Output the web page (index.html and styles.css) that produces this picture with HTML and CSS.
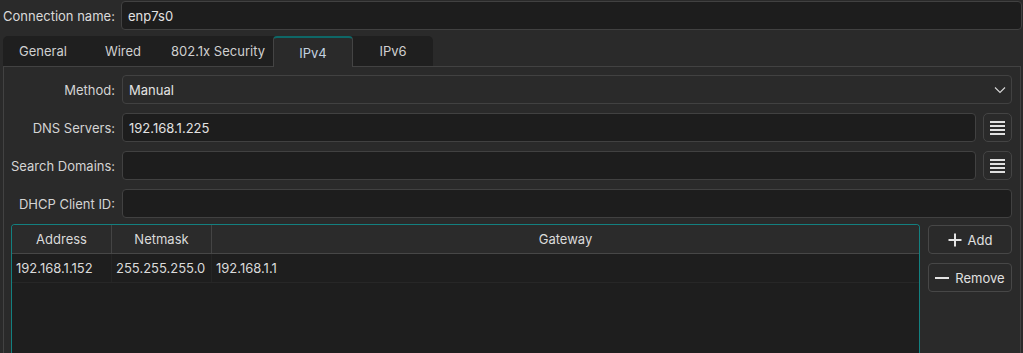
FILE: index.html
```html
<!DOCTYPE html>
<html>
<head>
    <meta charset="UTF-8">
    <title>Editing enp7s0</title>
    <link rel="stylesheet" href="styles.css">
</head>
<body>
    <!-- connection name -->
    <div class="top-row">
        <span class="top-label">Connection name:</span>
        <div class="field">enp7s0</div>
    </div>

    <!-- tabs -->
    <div class="tabs">
        <div class="tab">General</div>
        <div class="tab">Wired</div>
        <div class="tab wide">802.1x Security</div>
        <div class="tab active">IPv4</div>
        <div class="tab">IPv6</div>
    </div>

    <div class="panel">
        <div class="form">
            <span class="label">Method:</span>
            <div class="field combo span">
                <span>Manual</span>
                <svg width="12" height="8" viewBox="0 0 12 8"><path d="M1 1.5 L6 6.5 L11 1.5" fill="none" stroke="#d8d8d8" stroke-width="1.1"/></svg>
            </div>

            <span class="label">DNS Servers:</span>
            <div class="field">192.168.1.225</div>
            <div class="icon-btn">
                <svg width="15" height="14" viewBox="0 0 15 14"><g fill="#e0e0e0"><rect y="0" width="15" height="2"/><rect y="4" width="15" height="2"/><rect y="8" width="15" height="2"/><rect y="12" width="15" height="2"/></g></svg>
            </div>

            <span class="label">Search Domains:</span>
            <div class="field"></div>
            <div class="icon-btn">
                <svg width="15" height="14" viewBox="0 0 15 14"><g fill="#e0e0e0"><rect y="0" width="15" height="2"/><rect y="4" width="15" height="2"/><rect y="8" width="15" height="2"/><rect y="12" width="15" height="2"/></g></svg>
            </div>

            <span class="label">DHCP Client ID:</span>
            <div class="field span"></div>
        </div>

        <div class="addresses">
            <div class="table">
                <div class="thead">
                    <div class="cell c-addr">Address</div>
                    <div class="cell c-mask">Netmask</div>
                    <div class="cell c-gw">Gateway</div>
                </div>
                <div class="trow">
                    <div class="cell c-addr">192.168.1.152</div>
                    <div class="cell c-mask">255.255.255.0</div>
                    <div class="cell c-gw">192.168.1.1</div>
                </div>
            </div>
            <div class="side">
                <div class="btn">
                    <svg width="14" height="14" viewBox="0 0 14 14"><path d="M7 0.5 V13.5 M0.5 7 H13.5" stroke="#e4e4e4" stroke-width="2"/></svg>
                    Add
                </div>
                <div class="btn">
                    <svg width="14" height="14" viewBox="0 0 14 14"><path d="M0 7 H14" stroke="#e4e4e4" stroke-width="2"/></svg>
                    Remove
                </div>
            </div>
        </div>
    </div>
</body>
</html>
```

FILE: styles.css
```css
* { margin: 0; padding: 0; box-sizing: border-box; }
body {
    height: 100vh;
    overflow: hidden;
    background: #2a2a2a;
    color: #dadada;
    font-family: Inter, "Noto Sans", sans-serif;
    font-size: 13px;
    white-space: nowrap;
}

/* connection name */
.top-row {
    display: flex;
    align-items: center;
    padding: 1px 1px 0 3px;
}
.top-label {
    width: 118px;
}

.field {
    flex: 1;
    height: 29px;
    display: flex;
    align-items: center;
    padding: 0 6px;
    background: #1d1d1d;
    border: 1px solid #414141;
    border-radius: 4px;
    color: #e2e2e2;
}

/* tabs */
.tabs {
    display: flex;
    margin: 6px 0 0 3px;
    width: 430px;
    height: 30px;
    background: #1f1f1f;
    border-radius: 5px 5px 0 0;
}
.tab {
    width: 80px;
    display: flex;
    align-items: center;
    justify-content: center;
    color: #d0d0d0;
}
.tab.wide { width: 110px; }
.tab.active {
    background: #2a2a2a;
    border: 1px solid #444;
    border-top: 2px solid #0e6767;
    border-bottom: none;
    border-radius: 4px 4px 0 0;
    color: #c4d2e0;
    position: relative;
    z-index: 1;
    height: 31px;
}

/* panel */
.panel {
    margin: 0 2px 0 3px;
    height: 287px;
    border: 1px solid #424242;
    border-bottom: none;
    padding: 8px 8px 0 7px;
}

.form {
    display: grid;
    grid-template-columns: 104px 1fr 29px;
    column-gap: 7px;
    row-gap: 9px;
}
.label {
    text-align: right;
    align-self: center;
    color: #d4d4d4;
}
.span { grid-column: span 2; }

.combo {
    justify-content: space-between;
    background: #2a2a2a;
    padding-right: 5px;
}

.icon-btn {
    height: 29px;
    display: flex;
    align-items: center;
    justify-content: center;
    border: 1px solid #444;
    border-radius: 5px;
}

/* address table */
.addresses {
    display: flex;
    gap: 8px;
    margin-top: 6px;
}
.table {
    flex: 1;
    height: 129px;
    background: #1e1e1e;
    border: 1px solid #138080;
    border-bottom: none;
    border-radius: 4px 4px 0 0;
    overflow: hidden;
}
.thead, .trow {
    display: flex;
    height: 29px;
}
.thead {
    background: #2b2b2b;
    border-bottom: 1px solid #474747;
}
.thead .cell {
    justify-content: center;
    border-right: 1px solid #444;
}
.trow {
    border-bottom: 1px solid #272727;
}
.trow .cell {
    padding-left: 4px;
    border-right: 1px solid #252525;
}
.cell {
    display: flex;
    align-items: center;
}
.c-addr { width: 100px; }
.c-mask { width: 100px; }
.c-gw { flex: 1; border-right: none !important; }

.side {
    width: 84px;
    display: flex;
    flex-direction: column;
    gap: 9px;
    padding-top: 1px;
}
.btn {
    height: 29px;
    display: flex;
    align-items: center;
    justify-content: center;
    gap: 6px;
    border: 1px solid #474747;
    border-radius: 4px;
    color: #e0e0e0;
}
```
